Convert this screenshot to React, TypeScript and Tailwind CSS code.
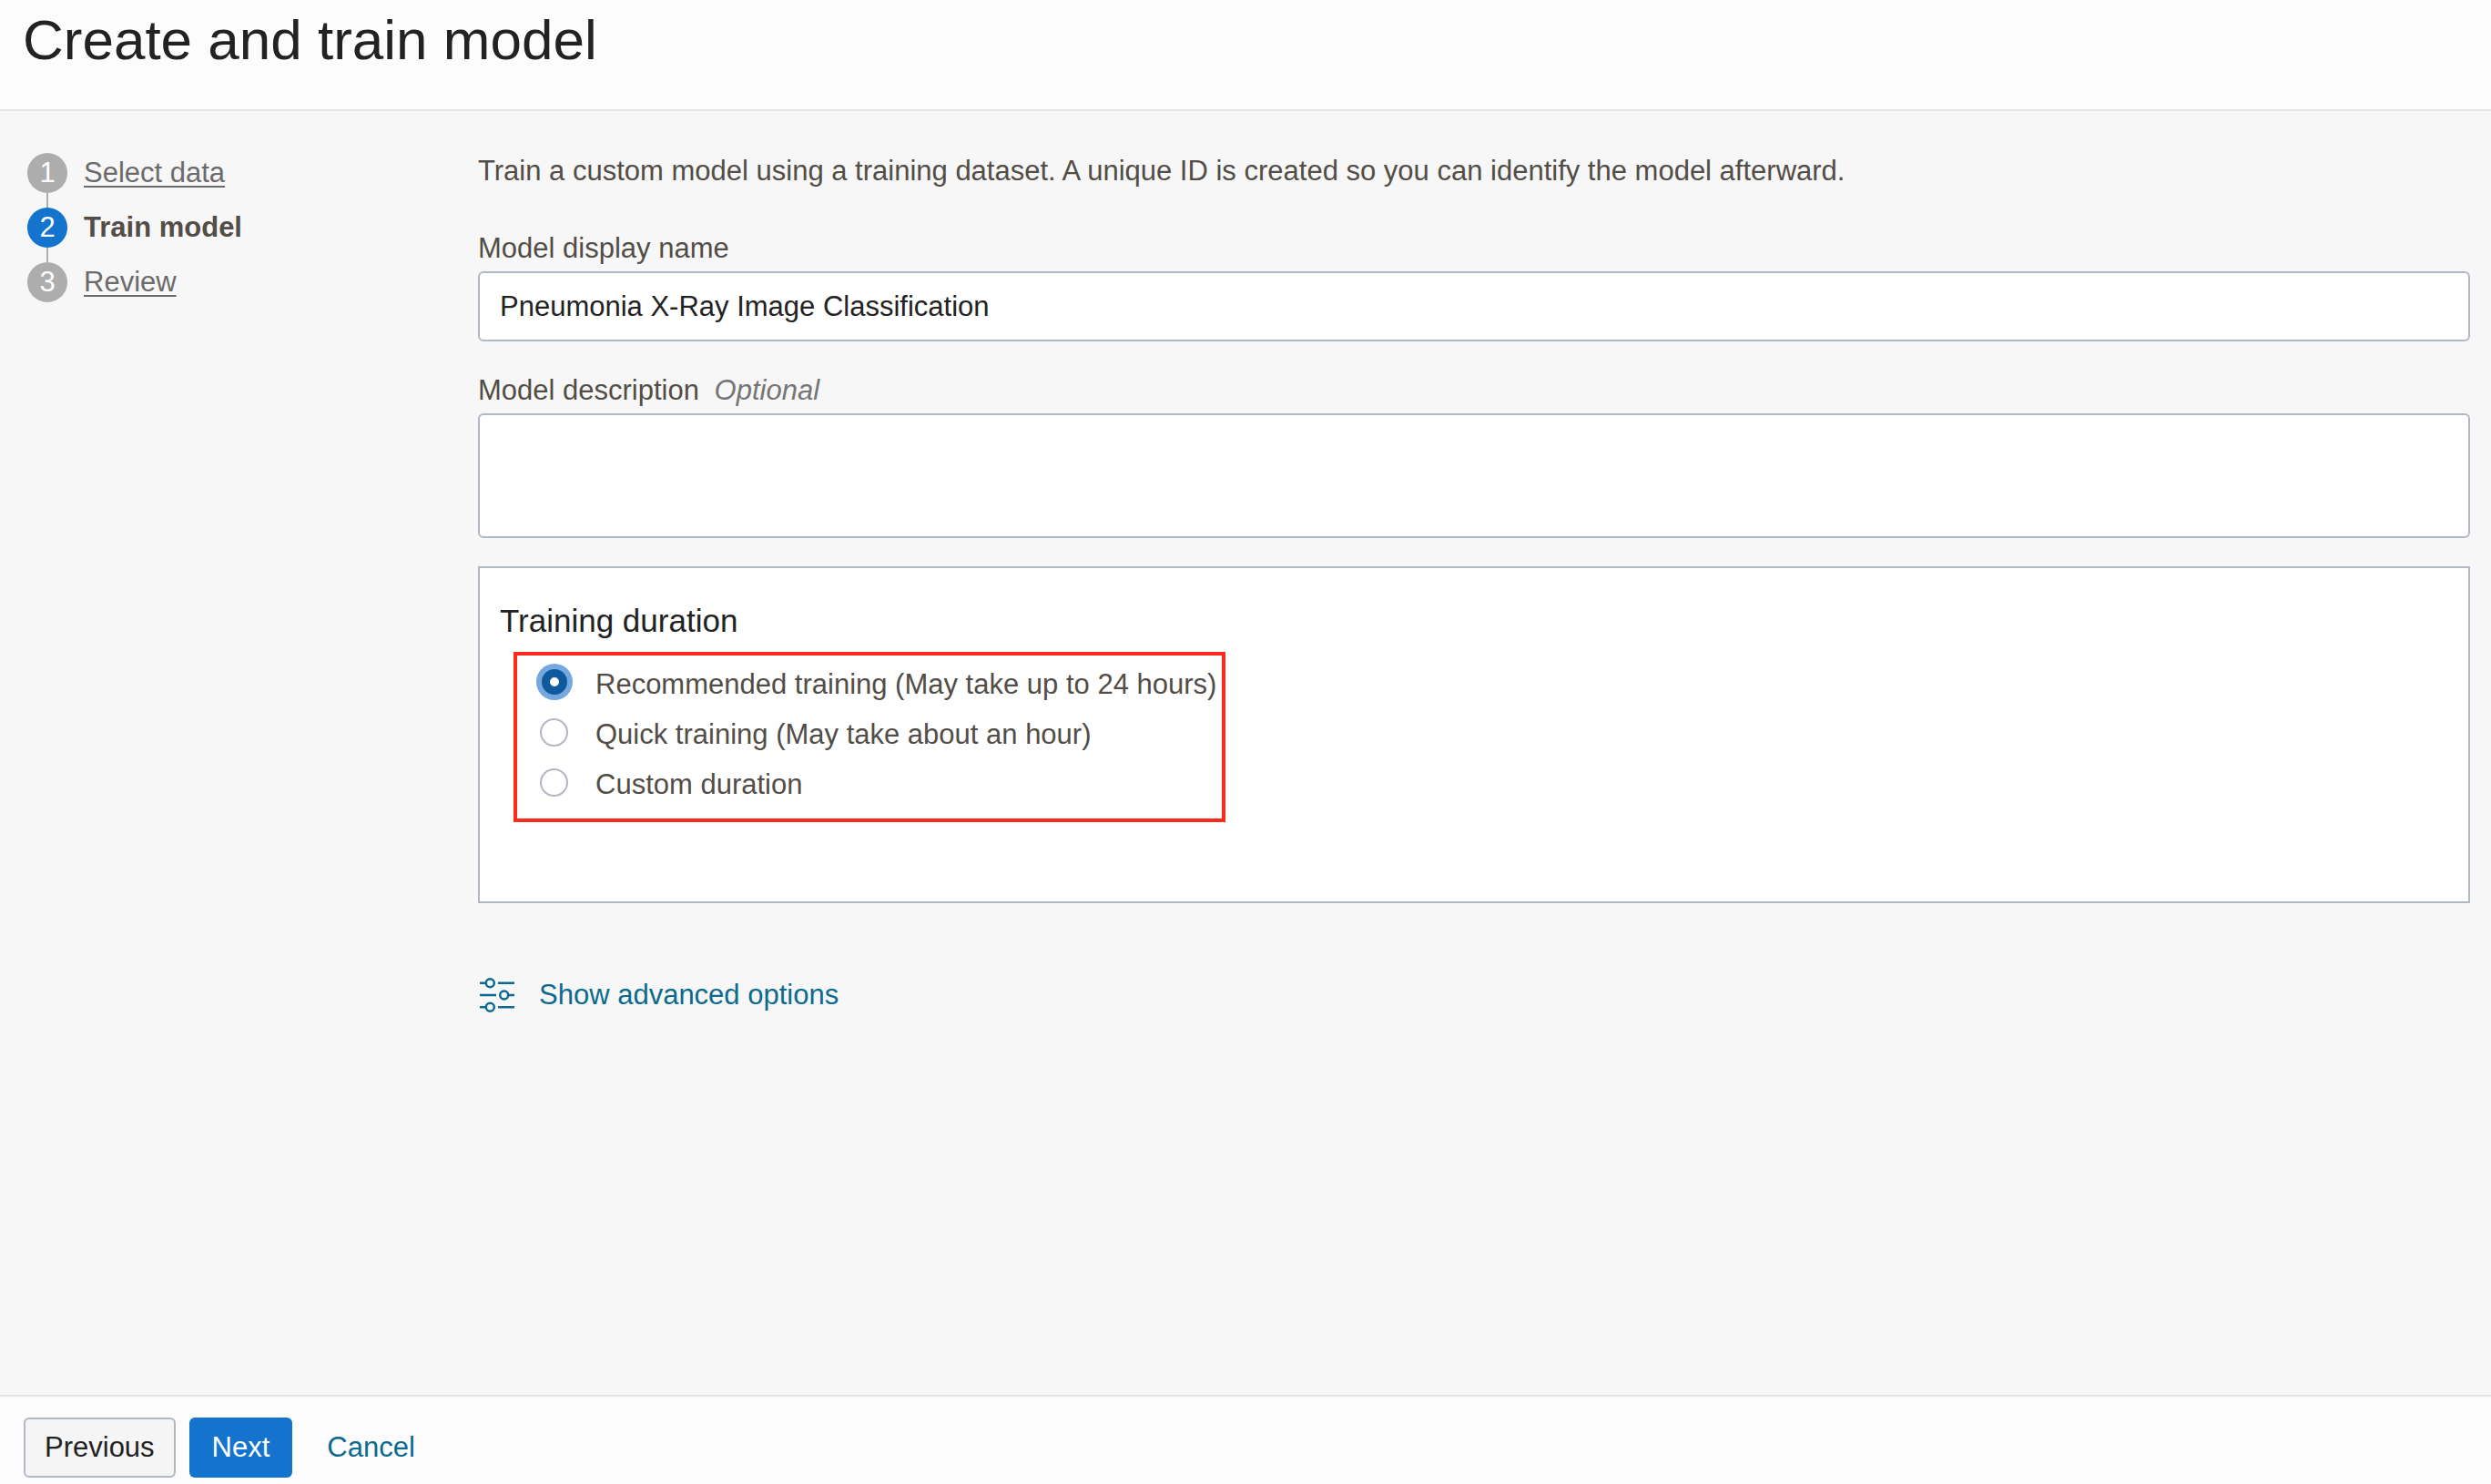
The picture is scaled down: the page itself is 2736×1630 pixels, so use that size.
import { useState } from "react";

const steps = [
  { label: "Select data", current: false },
  { label: "Train model", current: true },
  { label: "Review", current: false },
];

const durations = [
  { id: "recommended", label: "Recommended training (May take up to 24 hours)" },
  { id: "quick", label: "Quick training (May take about an hour)" },
  { id: "custom", label: "Custom duration" },
];

function StepList() {
  return (
    <ol className="flex flex-col">
      {steps.map((step, index) => (
        <li key={step.label}>
          {index > 0 && <div className="ml-[21px] h-4 w-0.5 bg-[#adadad]" />}
          <div className="flex h-[44px] items-center gap-[18px]">
            <span
              className={
                step.current
                  ? "flex size-[44px] items-center justify-center rounded-full bg-[#1474cd] text-white"
                  : "flex size-[44px] items-center justify-center rounded-full bg-[#adadad] text-white"
              }
            >
              {index + 1}
            </span>
            {step.current ? (
              <span aria-current="step" className="font-bold">
                {step.label}
              </span>
            ) : (
              <a href="#" className="text-[#6b6b6b] underline decoration-2 underline-offset-4">
                {step.label}
              </a>
            )}
          </div>
        </li>
      ))}
    </ol>
  );
}

function SlidersIcon() {
  return (
    <svg
      viewBox="0 0 38 38"
      className="size-[38px]"
      fill="none"
      stroke="currentColor"
      strokeWidth="2.5"
      aria-hidden="true"
    >
      <circle cx="11.3" cy="5.8" r="4.5" />
      <path d="M0 5.8h6.8M20 5.8h18" />
      <circle cx="26.7" cy="19" r="4.5" />
      <path d="M0 19h18M31.2 19H38" />
      <circle cx="11.3" cy="32.2" r="4.5" />
      <path d="M0 32.2h6.8M20 32.2h18" />
    </svg>
  );
}

export default function App() {
  const [name, setName] = useState("Pneumonia X-Ray Image Classification");
  const [description, setDescription] = useState("");
  const [duration, setDuration] = useState("recommended");

  return (
    <div className="flex min-h-screen flex-col bg-[#f7f7f7] font-['Liberation_Sans',Arial,sans-serif] text-[31px] leading-[40px] text-[#524d47]">
      <header className="border-b-2 border-[#e4e4e4] bg-[#fcfcfc] px-[25px] pt-[8px] pb-[40px]">
        <h1 className="text-[62px] leading-[72px] text-[#222222]">Create and train model</h1>
      </header>

      <div className="flex flex-1 items-start pr-[23px] pl-[30px]">
        <nav aria-label="Steps" className="w-[495px] shrink-0 pt-[46px]">
          <StepList />
        </nav>

        <main className="min-w-0 flex-1 pt-[46px]">
          <p>
            Train a custom model using a training dataset. A unique ID is created so you can identify
            the model afterward.
          </p>

          <div className="mt-[45px] flex flex-col gap-[5px]">
            <label htmlFor="model-name">Model display name</label>
            <input
              id="model-name"
              type="text"
              value={name}
              onChange={(e) => setName(e.target.value)}
              className="w-full rounded-md border-2 border-[#b1b8c3] bg-white px-[22px] pt-[17px] pb-[16px] text-[#222222] outline-none"
            />
          </div>

          <div className="mt-[34px] flex flex-col gap-[5px]">
            <label htmlFor="model-description">
              Model description <em className="ml-[8px] text-[#757575]">Optional</em>
            </label>
            <textarea
              id="model-description"
              value={description}
              onChange={(e) => setDescription(e.target.value)}
              className="h-[137px] w-full resize-none rounded-md border-2 border-[#b1b8c3] bg-white px-[22px] py-[16px] text-[#222222] outline-none"
            />
          </div>

          <section className="mt-[31px] border-2 border-[#b1b8c3] bg-white px-[22px] pt-[38px] pb-[87px]">
            <h2 id="duration-title" className="text-[35px] leading-[40px] text-[#222222]">
              Training duration
            </h2>
            <div
              role="radiogroup"
              aria-labelledby="duration-title"
              className="mt-[14px] ml-[15px] flex w-fit flex-col gap-[15px] border-4 border-[#ff2a1c] pt-[12px] pr-[6px] pb-[17px] pl-[25px]"
            >
              {durations.map((option) => (
                <label key={option.id} className="flex items-center gap-[30px]">
                  <span className="mb-[6px] flex size-[31px] items-center justify-center">
                    <input
                      type="radio"
                      name="duration"
                      value={option.id}
                      checked={duration === option.id}
                      onChange={() => setDuration(option.id)}
                      className="size-[31px] appearance-none rounded-full border-2 border-[#b1b8c3] bg-white checked:size-[28px] checked:border-[9px] checked:border-[#0f5a9c] checked:ring-[6px] checked:ring-[#76a8e0]"
                    />
                  </span>
                  {option.label}
                </label>
              ))}
            </div>
          </section>

          <button type="button" className="mt-[81px] ml-[2px] flex items-center gap-[27px] text-[#0b6a8f]">
            <SlidersIcon />
            Show advanced options
          </button>
        </main>
      </div>

      <footer className="flex items-center border-t-2 border-[#e4e4e4] bg-[#fcfcfc] px-[26px] pt-[23px] pb-[7px]">
        <button
          type="button"
          className="rounded-md border-2 border-[#b1b8c3] bg-[#f5f5f5] px-[21px] py-[11px] text-[#222222]"
        >
          Previous
        </button>
        <button type="button" className="ml-[15px] rounded-md bg-[#1474cd] px-[25px] py-[13px] text-white">
          Next
        </button>
        <a href="#" className="ml-[38px] text-[#0b6a8f]">
          Cancel
        </a>
      </footer>
    </div>
  );
}
